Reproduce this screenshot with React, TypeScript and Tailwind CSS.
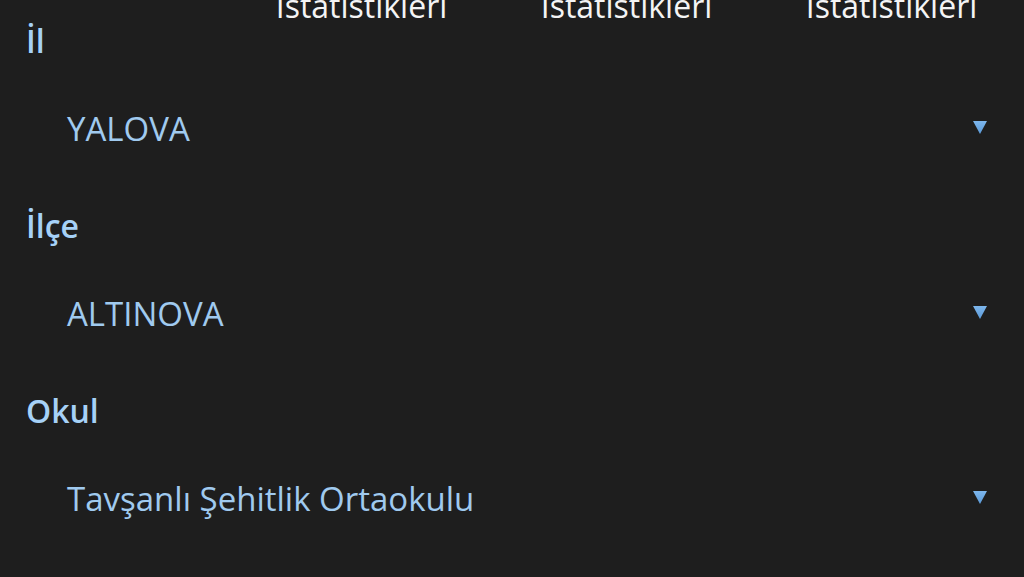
import React from 'react'

interface Field {
  label: string
  value: string
}

const fields: Field[] = [
  { label: 'İl', value: 'YALOVA' },
  { label: 'İlçe', value: 'ALTINOVA' },
  { label: 'Okul', value: 'Tavşanlı Şehitlik Ortaokulu' },
]

const Caret: React.FC = () => (
  <svg width="14" height="13" viewBox="0 0 14 13" className="shrink-0 -mt-[3px]">
    <defs>
      <linearGradient id="caretFill" x1="0" y1="0" x2="0" y2="1">
        <stop offset="0%" stopColor="#7db6ec" />
        <stop offset="100%" stopColor="#5b9ad8" />
      </linearGradient>
    </defs>
    <path d="M0 0 H14 L7 13 Z" fill="url(#caretFill)" />
  </svg>
)

const App: React.FC = () => {
  return (
    <div className="w-[1024px] h-[577px] overflow-hidden bg-[#1e1e1e] font-['Open_Sans','Noto_Sans',sans-serif]">
      {/* Stat tabs, scrolled past the top */}
      <div className="flex justify-end items-end h-[22px]">
        {['İstatistikleri', 'İstatistikleri', 'İstatistikleri'].map((t, i) => (
          <div key={i} className="w-[265px] text-center text-[32px] leading-none text-[#f4f4f4]">
            {t}
          </div>
        ))}
      </div>

      {/* Selection fields */}
      <div className="flex flex-col gap-[54px] pl-[26px] pr-[37px]">
        {fields.map((f) => (
          <div key={f.label} className="flex flex-col">
            <div className="text-[32px] leading-[40px] font-semibold text-[#a6d1f7] -mt-[1px]">{f.label}</div>
            <div className="mt-[44px] h-[48px] flex items-center justify-between pl-[41px]">
              <span className="text-[33px] leading-[44px] text-[#a0caef]">{f.value}</span>
              <Caret />
            </div>
          </div>
        ))}
      </div>
    </div>
  )
}

export default App
